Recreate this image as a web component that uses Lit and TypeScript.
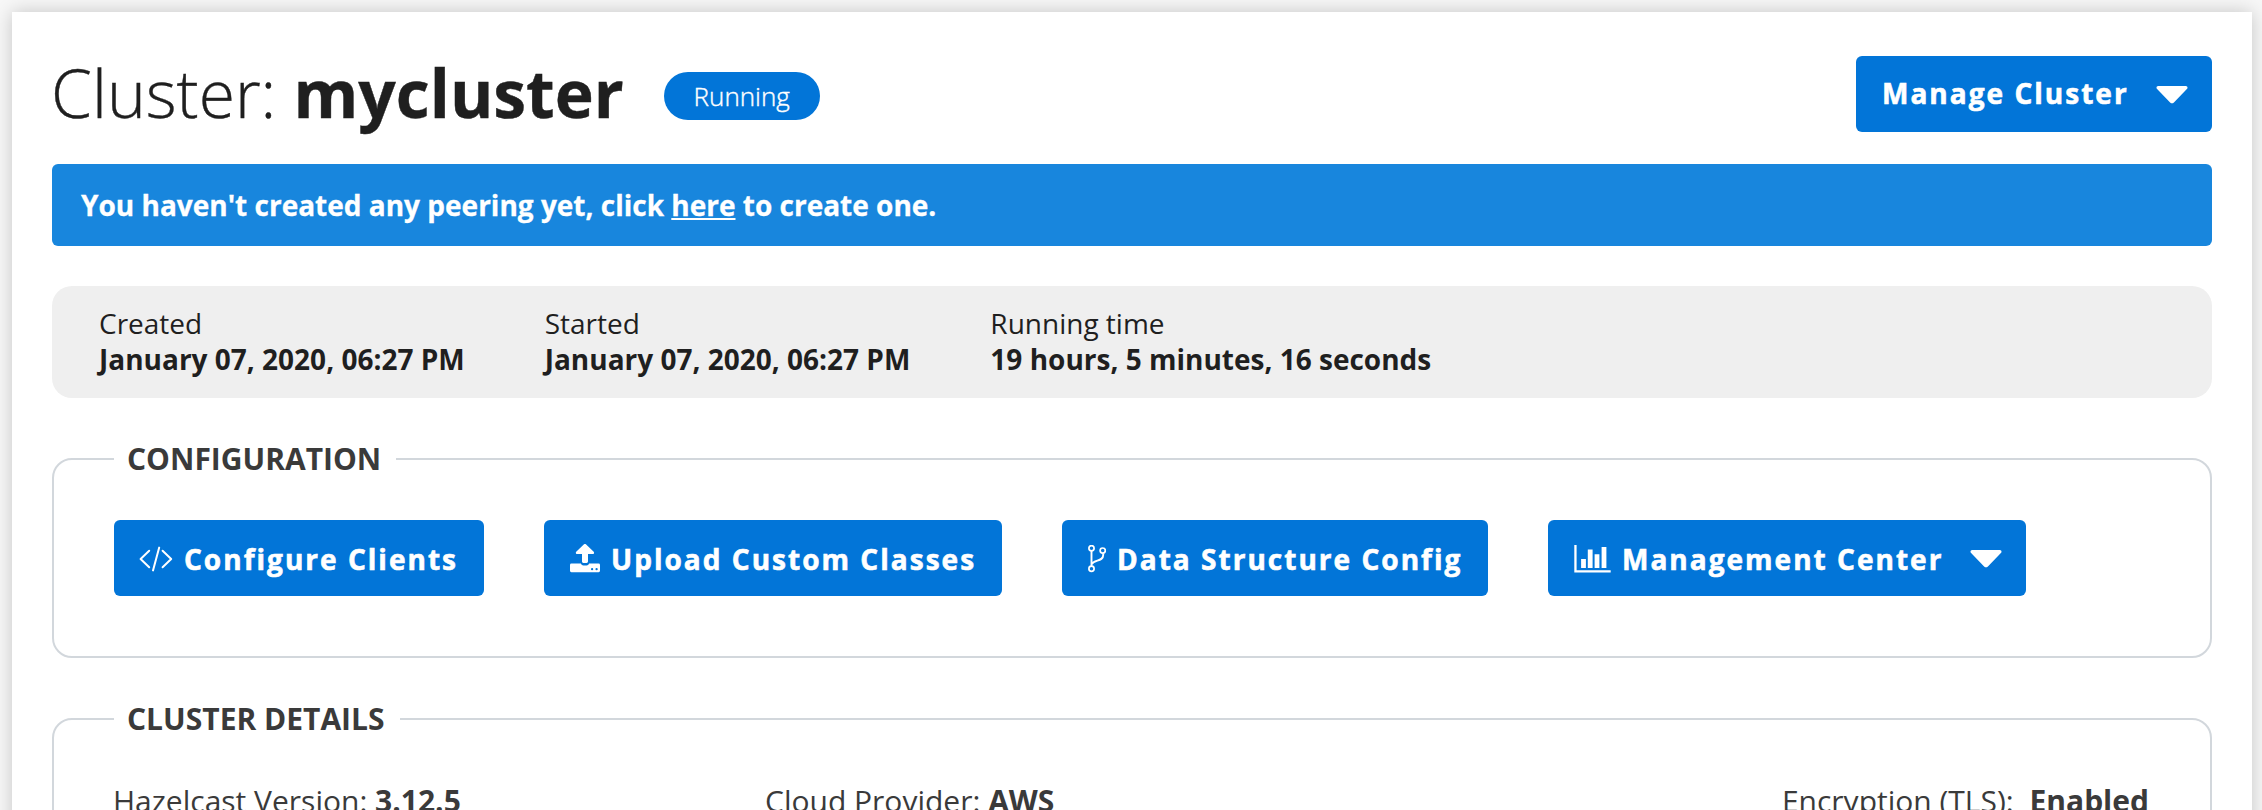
import { LitElement, html, css } from "lit";
import { customElement } from "lit/decorators.js";

const caret = html`<svg class="caret" width="32" height="18" viewBox="0 0 32 18"><path d="M2.2 0H29.8C31.6 0 32 2 30.9 3.1L17.9 16.4Q16 18.2 14.1 16.4L1.1 3.1C0 2 .4 0 2.2 0Z" fill="currentColor"/></svg>`;

const codeIcon = html`<svg class="code" width="34" height="26" viewBox="0 0 34 26" fill="none" stroke="currentColor" stroke-width="2" stroke-linecap="round" stroke-linejoin="round"><path d="M10.2 4.8L1.6 13L10.2 21.2M23.6 4.8L32.2 13L23.6 21.2M20.2 1.6L14 24.4"/></svg>`;

const uploadIcon = html`<svg width="30" height="30" viewBox="0 0.4 30 30" fill="currentColor"><path fill-rule="evenodd" d="M1.4 20H11V20.2A2.6 2.6 0 0 0 13.4 22H16.6A2.6 2.6 0 0 0 19 20.2V20H28.6A1.4 1.4 0 0 1 30 21.4V27.2A1.4 1.4 0 0 1 28.6 28.6H1.4A1.4 1.4 0 0 1 0 27.2V21.4A1.4 1.4 0 0 1 1.4 20ZM22.1 24.4A1.15 1.15 0 1 0 22.1 26.7A1.15 1.15 0 1 0 22.1 24.4ZM26.6 24.4A1.15 1.15 0 1 0 26.6 26.7A1.15 1.15 0 1 0 26.6 24.4Z"/><path d="M13.3 19.4A1.4 1.4 0 0 1 12 18V10.4H7.1C5.9 10.4 5.4 9 6.2 8.2L14 .7A1.3 1.3 0 0 1 15.9 .7L23.7 8.2C24.5 9 24 10.4 22.8 10.4H18V18A1.4 1.4 0 0 1 16.6 19.4Z"/></svg>`;

const branchIcon = html`<svg width="18" height="28" viewBox="0 0.6 18 28" fill="none" stroke="currentColor"><g stroke-width="1.7"><circle cx="3.5" cy="3.8" r="2.6"/><circle cx="3.5" cy="24.4" r="2.6"/><circle cx="14.7" cy="6.2" r="2.6"/></g><path stroke-width="1.9" d="M3.5 6.4V21.8M15.2 8.8V10.6C15.2 17.6 6 14.8 3.7 19.8"/></svg>`;

const chartIcon = html`<svg width="37" height="28" viewBox="0 0 37 28" fill="currentColor"><path d="M.3 0H2.6V25.3H36.7V27.4H.3ZM7.1 13.9H11.9V22.9H7.1ZM13.8 4.4H18.6V22.9H13.8ZM20.6 9.3H25.4V22.9H20.6ZM27.6 2.1H32.4V22.9H27.6Z"/></svg>`;

@customElement("app-root")
export class AppRoot extends LitElement {
  static styles = css`
    :host {
      display: block;
      box-sizing: border-box;
      height: 810px;
      overflow: hidden;
      padding: 12px 10px 0 12px;
      background: #f7f7f7;
      font-family: "Open Sans", sans-serif;
      font-size: 28px;
      line-height: 36px;
      color: #1f1f1f;
    }
    .card {
      box-sizing: border-box;
      height: 900px;
      padding: 44px 40px 0;
      background: #fff;
      box-shadow: 0 0 18px rgba(0, 0, 0, 0.2);
    }
    .header {
      display: flex;
      align-items: flex-start;
      height: 108px;
    }
    .title {
      margin: 0 0 0 -1px;
      font-size: 66px;
      line-height: 72px;
      font-weight: 300;
      white-space: nowrap;
      -webkit-text-stroke: 0.4px currentColor;
    }
    .title b { font-weight: 700; }
    .badge {
      box-sizing: border-box;
      width: 156px;
      height: 48px;
      margin: 16px auto 0 40px;
      border-radius: 24px;
      background: #0275d8;
      color: #fff;
      font-size: 26px;
      font-weight: 300;
      line-height: 48px;
      text-align: center;
      -webkit-text-stroke: 0.4px currentColor;
    }
    .btn {
      box-sizing: border-box;
      display: flex;
      align-items: center;
      height: 76px;
      padding: 1px 24px 0 26px;
      border: 0;
      border-radius: 6px;
      background: #0275d8;
      color: #fff;
      font: 700 28px/74px "Open Sans", sans-serif;
      letter-spacing: 2.02px;
      white-space: nowrap;
      -webkit-text-stroke: 0.6px currentColor;
    }
    .btn svg { flex: none; }
    .btn .label { margin-left: 11px; }
    .btn .caret { margin-left: auto; }
    .btn .code { margin: 1px 0 0 -1px; }
    .manage {
      width: 356px;
      padding: 0 24px 2px 26px;
    }
    .manage .label { margin-left: 0; }
    .manage .caret { margin-top: 3px; }
    .clients { width: 370px; }
    .upload { width: 458px; }
    .data { width: 426px; }
    .center { width: 478px; }
    .alert {
      height: 82px;
      padding-left: 29px;
      border-radius: 6px;
      background: #1886dd;
      color: #fff;
      font-weight: 700;
      line-height: 82px;
      -webkit-text-stroke: 0.3px currentColor;
    }
    .alert a {
      color: inherit;
      text-decoration: underline;
    }
    .times {
      box-sizing: border-box;
      display: flex;
      gap: 80px;
      height: 112px;
      margin-top: 40px;
      padding: 19px 47px;
      border-radius: 20px;
      background: #efefef;
    }
    .times b { display: block; }
    fieldset {
      box-sizing: border-box;
      margin: 0;
      border: 2px solid #d2d7dc;
      border-radius: 20px;
      padding: 0 60px;
      color: #3a3a3a;
      font-size: 30px;
    }
    legend {
      padding: 0 15px 0 13px;
      font-weight: 700;
      line-height: 40px;
    }
    .config {
      height: 219px;
      margin-top: 41px;
    }
    .buttons {
      display: flex;
      gap: 60px;
      padding-top: 41px;
    }
    .details {
      height: 300px;
      margin-top: 41px;
    }
    .row {
      display: flex;
      margin: 0 1px 0 -1px;
      padding-top: 42px;
      line-height: 40px;
    }
    .row .first { width: 652px; }
    .row .last { margin-left: auto; }
    .row .last b { margin-left: 8px; }
  `;

  render() {
    return html`
      <main class="card">
        <header class="header">
          <h1 class="title">Cluster: <b>mycluster</b></h1>
          <span class="badge">Running</span>
          <button class="btn manage"><span class="label">Manage Cluster</span>${caret}</button>
        </header>
        <div class="alert">You haven't created any peering yet, click <a>here</a> to create one.</div>
        <section class="times">
          <div>Created<b>January 07, 2020, 06:27 PM</b></div>
          <div>Started<b>January 07, 2020, 06:27 PM</b></div>
          <div>Running time<b>19 hours, 5 minutes, 16 seconds</b></div>
        </section>
        <fieldset class="config">
          <legend>CONFIGURATION</legend>
          <div class="buttons">
            <button class="btn clients">${codeIcon}<span class="label">Configure Clients</span></button>
            <button class="btn upload">${uploadIcon}<span class="label">Upload Custom Classes</span></button>
            <button class="btn data">${branchIcon}<span class="label">Data Structure Config</span></button>
            <button class="btn center">${chartIcon}<span class="label">Management Center</span>${caret}</button>
          </div>
        </fieldset>
        <fieldset class="details">
          <legend>CLUSTER DETAILS</legend>
          <div class="row">
            <div class="first">Hazelcast Version: <b>3.12.5</b></div>
            <div>Cloud Provider: <b>AWS</b></div>
            <div class="last">Encryption (TLS): <b>Enabled</b></div>
          </div>
        </fieldset>
      </main>
    `;
  }
}
